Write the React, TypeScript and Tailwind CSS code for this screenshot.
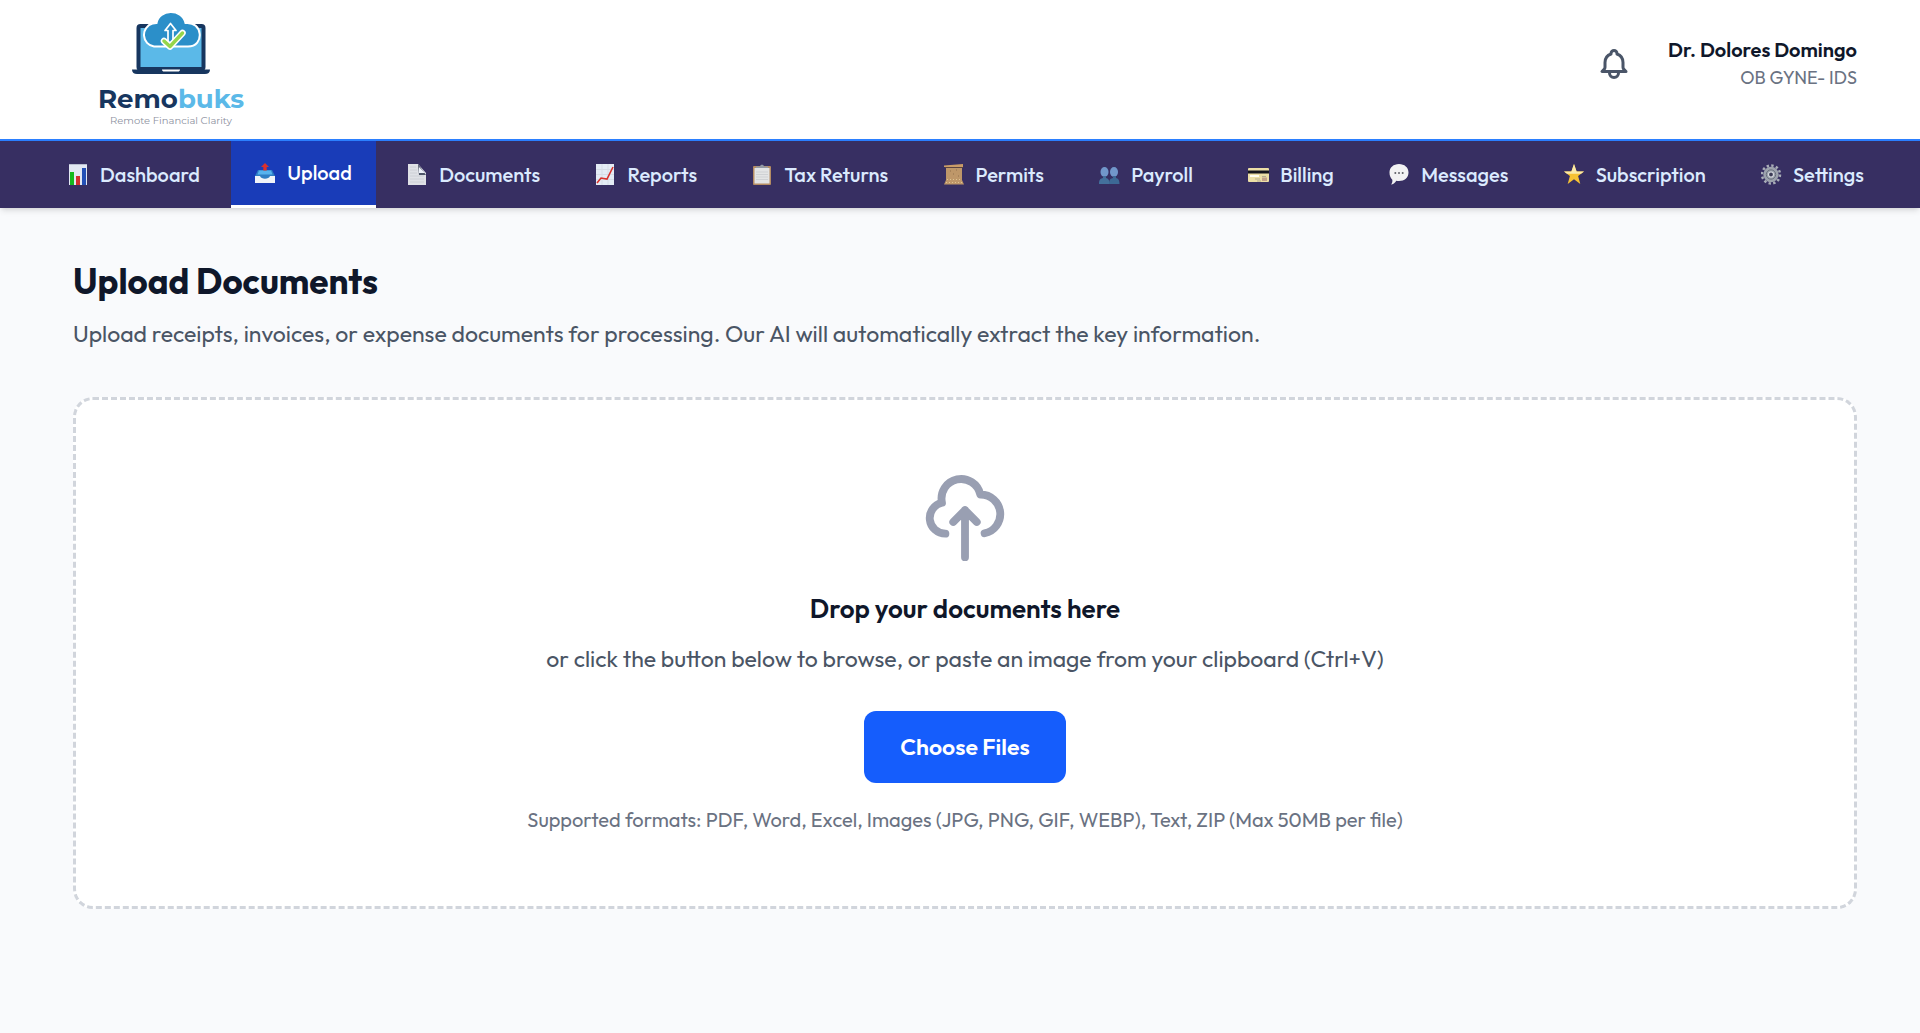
import type { ReactNode } from "react";

const navItems: { label: string; icon: ReactNode }[] = [
  {
    label: "Dashboard",
    icon: (
      <>
        <rect x="1" y="0" width="18" height="21" fill="#e3e8f3" />
        <rect x="1" y="0" width="18" height="1" fill="#b9bfd0" />
        <rect x="2" y="8" width="4" height="13" fill="#15b81e" />
        <rect x="8" y="12" width="4" height="9" fill="#d32f2f" />
        <rect x="14" y="4" width="4" height="17" fill="#2450b5" />
      </>
    ),
  },
  {
    label: "Upload",
    icon: (
      <>
        <path d="M3 7h14l3 6v6.500H0V13z" fill="#2f7fc4" />
        <path d="M4 7.500h12l1.500 4h-15z" fill="#57b3ee" />
        <path d="M0 13h5c1 3.500 9 3.500 10 0h5v7H0z" fill="#f1f4f8" />
        <path d="M10 0l4 4h-2.300v3.500H8.300V4H6z" fill="#d9302c" />
      </>
    ),
  },
  {
    label: "Documents",
    icon: (
      <>
        <path d="M1 0h10l8 9v12H1z" fill="#dfe1e6" />
        <path d="M11 0l8 11h-7z" fill="#4d5568" />
        <path d="M12 3l6 6h-6z" fill="#eef2fa" />
        <path d="M3 3h6M3 6h7M3 9h7M3 12h14M3 15h14M3 18h14" stroke="#cdd0d6" strokeWidth="1" />
      </>
    ),
  },
  {
    label: "Reports",
    icon: (
      <>
        <rect x="1" y="0" width="18" height="21" fill="#e4ecf5" />
        <path d="M1 5.500h18M1 10.500h18M1 15.500h18M7 0v21M13 0v21" stroke="#d6dde6" strokeWidth="1" />
        <path d="M2 19l4-5 6 1 6-12" fill="none" stroke="#d8322c" strokeWidth="1.600" />
      </>
    ),
  },
  {
    label: "Tax Returns",
    icon: (
      <>
        <rect x="1" y="2" width="18" height="19" rx="1" fill="#b58c63" />
        <rect x="2.500" y="4" width="15" height="15.500" fill="#e3e4e5" />
        <path d="M4 8h12M4 10.500h12M4 13h12M4 15.500h12" stroke="#cfd1d4" strokeWidth="1" />
        <path d="M4 4V2.500h4C8 0 12 0 12 2.500h4V4z" fill="#9299a5" />
      </>
    ),
  },
  {
    label: "Permits",
    icon: (
      <>
        <path d="M2 2h16v14l2 4.500H0L2 16z" fill="#be9769" />
        <path d="M0 1.500L19 0v3H0z" fill="#c99c68" />
        <path d="M1 3.500h18" stroke="#5c4440" strokeWidth="1" />
        <path d="M3 15.500h14M2 18.500h16" stroke="#dfc491" strokeWidth="1" strokeDasharray="1 2" />
        <path d="M6 7h1M12 6h1M9 10h1M14 12h1" stroke="#91704e" strokeWidth="1" />
      </>
    ),
  },
  {
    label: "Payroll",
    icon: (
      <>
        <ellipse cx="5.500" cy="8" rx="4" ry="5" fill="#7197ca" />
        <ellipse cx="15" cy="8" rx="4" ry="5" fill="#7197ca" />
        <path d="M0 20c0-5 2-5.500 4-6v-2h3v2c2 .5 3.500 1.500 3.500 6z" fill="#44709c" />
        <path d="M10 20c0-5 2-5.500 4-6v-2h3v2c2 .5 3.500 1.500 3.500 6z" fill="#3d6995" />
      </>
    ),
  },
  {
    label: "Billing",
    icon: (
      <>
        <rect x="0" y="4" width="21" height="14" rx="1" fill="#ecdfa6" />
        <rect x="0" y="6.500" width="21" height="3" fill="#14151c" />
        <rect x="2" y="11" width="9" height="2" fill="#fffdf0" />
        <path d="M7 15h5M14 12.500h4M9 17h4" stroke="#b5ad92" strokeWidth="1" />
        <rect x="14" y="13.500" width="5" height="3.500" fill="#c4a38a" />
      </>
    ),
  },
  {
    label: "Messages",
    icon: (
      <>
        <path d="M10 0c5.500 0 9.500 3.500 9.500 8.500s-4 8.500-9.500 8.500c-1 0-2 0-2.700-.3C6 19 4 20.500 2 20.500c1.300-1.200 1.600-3 1.300-4.800C1.500 14 .5 11.500.5 8.500.5 3.500 4.500 0 10 0z" fill="#f2f2f3" />
        <circle cx="6.300" cy="9" r="1" fill="#5f6168" />
        <circle cx="10" cy="9" r="1" fill="#5f6168" />
        <circle cx="13.700" cy="9" r="1" fill="#5f6168" />
      </>
    ),
  },
  {
    label: "Subscription",
    icon: (
      <>
        <path d="M10 0l2.600 7.400H20l-5.900 4.700L16.300 20 10 15.300 3.700 20l2.200-7.900L0 7.400h7.400z" fill="#f6c234" />
        <path d="M10 0l2.600 7.400H20l-3 2.400H3L0 7.400h7.400z" fill="#faeaaa" />
      </>
    ),
  },
  {
    label: "Settings",
    icon: (
      <>
        <circle cx="10" cy="10.500" r="9" fill="none" stroke="#a9aeb8" strokeWidth="2.500" strokeDasharray="2.400 2.310" />
        <circle cx="10" cy="10.500" r="7.700" fill="#9ca2ad" />
        <circle cx="10" cy="10.500" r="4.700" fill="none" stroke="#6a717e" strokeWidth="1" />
        <circle cx="10" cy="10.500" r="2.500" fill="#3b3b56" stroke="#d3d7dd" strokeWidth="1.200" />
      </>
    ),
  },
];

function Logo() {
  return (
    <a href="#" className="flex w-[184px] flex-col items-center pt-3 pb-3 font-[Montserrat,Lato,sans-serif]">
      <svg className="h-[63px] w-20" viewBox="0 0 80 63" aria-hidden="true">
        <rect x="7.500" y="14" width="65" height="43" rx="2" fill="#5bb9e8" stroke="#17365f" strokeWidth="4" />
        <path
          d="M23 34.500a11.800 11.800 0 0 1-1.500-23C22.500 11 24 11 25.500 11 28-3 51-4 54.500 11 72 9 74 34.500 57 34.500z"
          fill="#2b8fc9"
          stroke="#fff"
          strokeWidth="2"
        />
        <path d="M39.500 11.500l5.500 7h-3v12h-5v-12h-3z" fill="#2b8fc9" stroke="#fff" strokeWidth="1.700" strokeLinejoin="round" />
        <path d="M33 29l6 5.500L51.500 21" fill="none" stroke="#fff" strokeWidth="6.500" strokeLinecap="round" strokeLinejoin="round" />
        <path d="M33 29l6 5.500L51.500 21" fill="none" stroke="#95d54a" strokeWidth="3.500" strokeLinecap="round" strokeLinejoin="round" />
        <path d="M1 57.500h78c0 3-2 4.500-5 4.500H6c-3 0-5-1.500-5-4.500z" fill="#17365f" />
        <path d="M31 57.500h18c0 1.500-1 2-2 2H33c-1 0-2-.5-2-2z" fill="#fff" />
      </svg>
      <span className="mt-2 flex text-[26px] leading-8 font-bold">
        <span className="text-[#17365f]">Remo</span>
        <span className="text-[#5bb9e8]">buks</span>
      </span>
      <span className="text-[10px] leading-3 text-[#8c90a0]">Remote Financial Clarity</span>
    </a>
  );
}

function Header() {
  return (
    <header className="flex items-center justify-between bg-white pr-[63px] pl-[79px]">
      <Logo />
      <div className="flex items-center gap-9 pb-3">
        <button type="button" aria-label="Notifications" className="text-[#4a5568]">
          <svg
            className="size-9"
            viewBox="0 0 24 24"
            fill="none"
            stroke="currentColor"
            strokeWidth="2"
            strokeLinecap="round"
            strokeLinejoin="round"
          >
            <path d="M15 17h5l-1.405-1.405A2.032 2.032 0 0118 14.158V11a6.002 6.002 0 00-4-5.659V5a2 2 0 10-4 0v.341C7.67 6.165 6 8.388 6 11v3.159c0 .538-.214 1.055-.595 1.436L4 17h5m6 0v1a3 3 0 11-6 0v-1m6 0H9" />
          </svg>
        </button>
        <div className="text-right">
          <p className="text-[20px] leading-7 font-semibold text-[#0f172a]">Dr. Dolores Domingo</p>
          <p className="text-[18px] leading-7 text-[#6a7282]">OB GYNE- IDS</p>
        </div>
      </div>
    </header>
  );
}

function Nav() {
  return (
    <nav className="flex h-[69px] justify-between border-t-2 border-[#2b7fff] bg-[#372f62] pr-8 pl-11 shadow-md">
      {navItems.map((item) => {
        const active = item.label === "Upload";
        return (
          <a
            key={item.label}
            href="#"
            aria-current={active ? "page" : undefined}
            className={`flex items-center gap-[11px] px-6 text-[20px] font-medium whitespace-nowrap ${
              active ? "border-b-3 border-white bg-[#193cb8] text-white" : "text-[#dbeafe]"
            }`}
          >
            <svg className="h-[21px] w-[21px] shrink-0" viewBox="0 0 21 21" aria-hidden="true">
              {item.icon}
            </svg>
            {item.label}
          </a>
        );
      })}
    </nav>
  );
}

export default function App() {
  return (
    <div className="min-h-screen bg-[#f9fafc] font-[Outfit,Lato,sans-serif]">
      <Header />
      <Nav />
      <main className="pt-[49px] pr-[63px] pb-12 pl-[73px]">
        <h1 className="text-[35px] leading-12 font-bold text-[#0f172a]">Upload Documents</h1>
        <p className="mt-[11px] text-[23px] leading-9 text-[#4a5565]">
          Upload receipts, invoices, or expense documents for processing. Our AI will automatically extract the key
          information.
        </p>
        <section className="mt-[45px] flex flex-col items-center rounded-[20px] border-3 border-dashed border-[#d1d5dc] bg-white px-8 py-[71px] text-center">
          <svg
            className="size-[94px] text-[#999fb2]"
            viewBox="0 0 24 24"
            fill="none"
            stroke="currentColor"
            strokeWidth="2"
            strokeLinecap="round"
            strokeLinejoin="round"
            aria-hidden="true"
          >
            <path d="M7 16a4 4 0 01-.88-7.903A5 5 0 1115.900 6L16 6a5 5 0 011 9.900M15 13l-3-3m0 0l-3 3m3-3v12" />
          </svg>
          <h2 className="mt-[26px] text-[26px] leading-9 font-semibold text-[#0f172a]">Drop your documents here</h2>
          <p className="mt-[14px] text-[23px] leading-9 text-[#4a5565]">
            or click the button below to browse, or paste an image from your clipboard (Ctrl+V)
          </p>
          <button
            type="button"
            className="mt-[34px] rounded-xl bg-[#155dfc] px-9 py-[18px] text-[23px] leading-9 font-semibold text-white"
          >
            Choose Files
          </button>
          <p className="mt-[22px] text-[20px] leading-[30px] text-[#6a7282]">
            Supported formats: PDF, Word, Excel, Images (JPG, PNG, GIF, WEBP), Text, ZIP (Max 50MB per file)
          </p>
        </section>
      </main>
    </div>
  );
}
